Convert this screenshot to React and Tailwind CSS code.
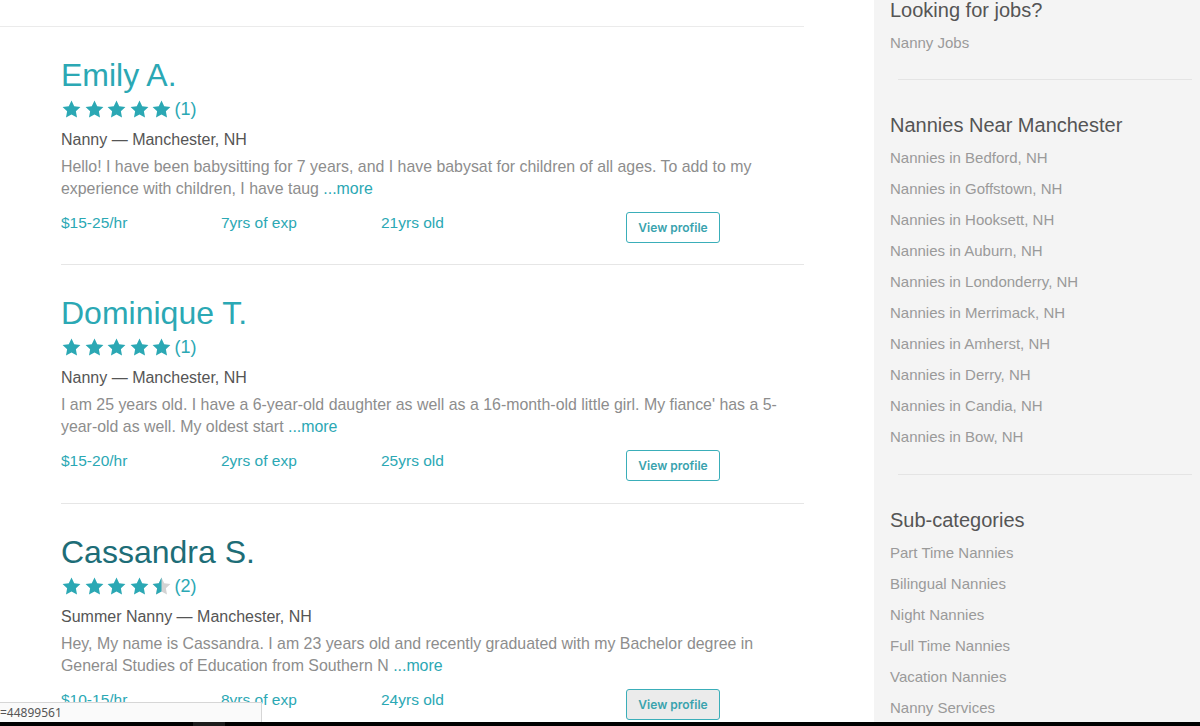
import React from 'react';

const TEAL = 'text-[#2ba8b4]';

const nannies = [
  {
    name: 'Emily A.',
    nameClass: 'text-[#2ba8b4]',
    rating: 5,
    count: 1,
    role: 'Nanny',
    bio: 'Hello! I have been babysitting for 7 years, and I have babysat for children of all ages. To add to my experience with children, I have taug',
    rate: '$15-25/hr',
    exp: '7yrs of exp',
    age: '21yrs old',
  },
  {
    name: 'Dominique T.',
    nameClass: 'text-[#2ba8b4]',
    rating: 5,
    count: 1,
    role: 'Nanny',
    bio: "I am 25 years old. I have a 6-year-old daughter as well as a 16-month-old little girl. My fiance' has a 5-year-old as well. My oldest start",
    rate: '$15-20/hr',
    exp: '2yrs of exp',
    age: '25yrs old',
  },
  {
    name: 'Cassandra S.',
    nameClass: 'text-[#1d6d77]',
    rating: 4.5,
    count: 2,
    role: 'Summer Nanny',
    bio: 'Hey, My name is Cassandra. I am 23 years old and recently graduated with my Bachelor degree in General Studies of Education from Southern N',
    rate: '$10-15/hr',
    exp: '8yrs of exp',
    age: '24yrs old',
    hover: true,
  },
];

const nearby = ['Bedford', 'Goffstown', 'Hooksett', 'Auburn', 'Londonderry', 'Merrimack', 'Amherst', 'Derry', 'Candia', 'Bow'];
const subs = ['Part Time Nannies', 'Bilingual Nannies', 'Night Nannies', 'Full Time Nannies', 'Vacation Nannies', 'Nanny Services'];

const STAR = 'M12 1.8l3.1 6.5 7.1.9-5.2 4.9 1.3 7.1L12 17.8l-6.3 3.4 1.3-7.1-5.2-4.9 7.1-.9z';

function Star({ fill }) {
  // fill: 1 full, 0.5 half, 0 empty
  return (
    <svg viewBox="0 0 24 24" className="w-[21px] h-[21px]">
      <defs>
        <clipPath id="half">
          <rect x="0" y="0" width="12" height="24" />
        </clipPath>
      </defs>
      <path d={STAR} fill={fill === 1 ? '#2ba8b4' : '#d3d3d3'} />
      {fill === 0.5 && <path d={STAR} fill="#2ba8b4" clipPath="url(#half)" />}
    </svg>
  );
}

function Stars({ rating, count }) {
  const list = [1, 2, 3, 4, 5].map((i) => (rating >= i ? 1 : rating >= i - 0.5 ? 0.5 : 0));
  return (
    <div className="flex items-center h-[24px] mt-[4px]">
      <div className="flex gap-[1.6px]">
        {list.map((f, i) => (
          <Star key={i} fill={f} />
        ))}
      </div>
      <span className={`ml-[2px] text-[18px] leading-[24px] ${TEAL}`}>({count})</span>
    </div>
  );
}

function NannyCard({ n, first, last }) {
  return (
    <div className={`pt-[30px] ${first ? 'pb-[22px]' : 'pb-[23px]'} ${last ? '' : 'border-b border-[#e6e6e6]'}`}>
      <h2 className={`text-[32px] leading-[36px] ${n.nameClass}`}>{n.name}</h2>
      <Stars rating={n.rating} count={n.count} />
      <div className="mt-[8px] text-[16px] leading-[22px] text-[#555]">
        {n.role} — Manchester, NH
      </div>
      <p className="mt-[5px] w-[720px] text-[15.9px] leading-[22px] text-[#8d8d8d]">
        {n.bio} <span className={TEAL}>...more</span>
      </p>
      <div className={`mt-[12px] h-[30px] flex items-start text-[15.5px] leading-[22px] ${TEAL}`}>
        <span className="w-[160px]">{n.rate}</span>
        <span className="w-[160px]">{n.exp}</span>
        <span className="w-[245px]">{n.age}</span>
        <button
          className={`w-[94px] h-[31px] rounded-[3px] border border-[#3aaeb9] text-[12px] leading-[29px] font-semibold text-[#3aa3ae] ${n.hover ? 'bg-[#ebebeb]' : 'bg-white'}`}
          style={{ fontFamily: 'Inter, sans-serif' }}
        >
          View profile
        </button>
      </div>
    </div>
  );
}

function SideSection({ title, links, first }) {
  return (
    <div className={first ? '-mt-[4px]' : 'mt-[31px]'}>
      <h3 className="text-[20px] leading-[28px] text-[#555]">{title}</h3>
      <ul className="mt-[3px]">
        {links.map((l) => (
          <li key={l} className="h-[31px] leading-[31px] text-[15px] text-[#9a9a9a]">
            {l}
          </li>
        ))}
      </ul>
    </div>
  );
}

export default function App() {
  return (
    <div
      className="relative w-[1200px] h-[726px] overflow-hidden bg-white flex flex-col"
      style={{ fontFamily: '"Liberation Sans", Arial, sans-serif' }}
    >
      <div className="flex h-[722px] overflow-hidden">
        <main className="w-[874px] shrink-0">
          <div className="mt-[26px] w-[804px] border-t border-[#ebebeb]" />
          <div className="ml-[61px] w-[743px]">
            {nannies.map((n, i) => (
              <NannyCard key={n.name} n={n} first={i === 0} last={i === nannies.length - 1} />
            ))}
          </div>
        </main>
        <aside className="flex-1 bg-[#f4f4f4]">
          <div className="pl-[16px]">
            <SideSection first title="Looking for jobs?" links={['Nanny Jobs']} />
          </div>
          <div className="mt-[21px] ml-[24px] mr-[8px] border-t border-[#e4e4e4]" />
          <div className="pl-[16px]">
            <SideSection title="Nannies Near Manchester" links={nearby.map((c) => `Nannies in ${c}, NH`)} />
          </div>
          <div className="mt-[22px] ml-[24px] mr-[8px] border-t border-[#e4e4e4]" />
          <div className="pl-[16px]">
            <SideSection title="Sub-categories" links={subs} />
          </div>
        </aside>
      </div>
      <div className="h-[4px] bg-black flex">
        <div className="ml-[193px] w-[32px] bg-[#1c1c1c]" />
      </div>
      <div
        className="absolute left-0 bottom-[4px] w-[262px] h-[20px] bg-[#fafafa] border-t border-r border-[#d6d6d6] text-[12px] leading-[19px] text-[#555]"
        style={{ fontFamily: '"Noto Sans", sans-serif' }}
      >
        =44899561
      </div>
    </div>
  );
}
